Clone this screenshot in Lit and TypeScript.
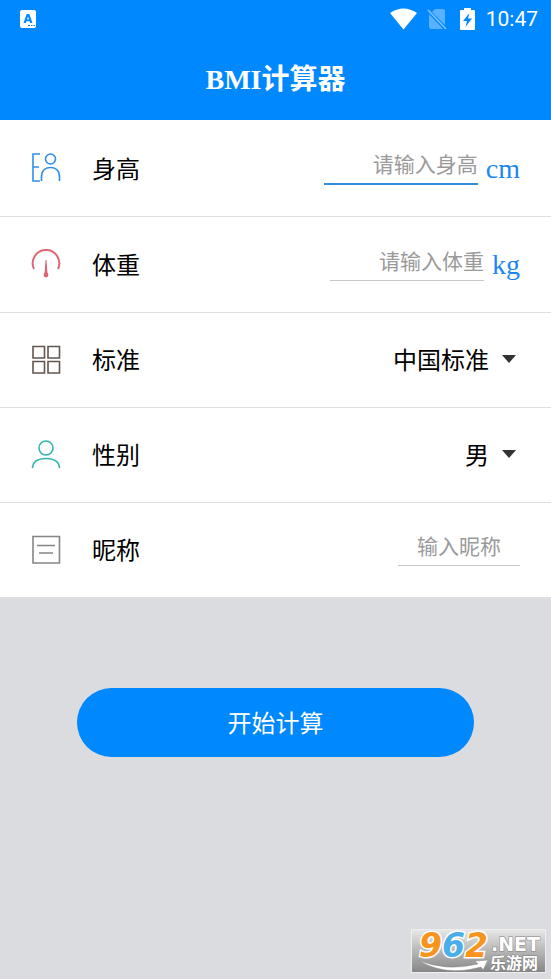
import { LitElement, html, css, svg } from "lit";
import { customElement } from "lit/decorators.js";

const icons = {
  height: svg`<g stroke="#2f8fe6"><path d="M9 1H2V28H9M2 14H8"/><circle cx="19.500" cy="6" r="5"/><path d="M10.500 28V24C10.500 17 15 14.500 19.500 14.500S28.500 17 28.500 24V28"/></g>`,
  weight: svg`<path stroke="#dc6674" stroke-width="2" d="M3 20A13.300 13.300 0 1 1 27 20"/><path fill="#dc6674" d="M14.500 11H15.500L16.500 25H13.500Z"/><circle cx="15" cy="26" r="2.400" fill="#dc6674"/>`,
  standard: svg`<path stroke="#62564f" d="M2 1.500H13.500V13H2ZM17 1.500H28.500V13H17ZM2 16.500H13.500V28H2ZM17 16.500H28.500V28H17Z"/>`,
  gender: svg`<g stroke="#35b5ad"><circle cx="15" cy="8" r="7"/><path d="M1.500 28C2 21 8 18.500 15 18.500S28 21 28.500 28"/></g>`,
  nickname: svg`<path stroke="#858585" d="M2 1.500H28.500V28H2ZM6 10.500H24M8 18H22"/>`,
};

@customElement("app-root")
export class AppRoot extends LitElement {
  static styles = css`
    :host {
      display: flex;
      flex-direction: column;
      position: relative;
      min-height: 100vh;
      background: #dbdce0;
      color: #000;
      font-family: "Liberation Serif", "Noto Sans CJK SC", sans-serif;
      font-size: 24px;
    }
    * { box-sizing: border-box; }
    svg { display: block; flex: none; }
    header { background: #0088ff; color: #fff; }
    .status {
      display: flex;
      align-items: center;
      height: 38px;
      padding: 0 13px 0 19px;
      font: 400 21px/38px Roboto, sans-serif;
    }
    .status .app { margin-right: auto; }
    .wifi { margin-right: 10px; }
    .sim { margin-right: 13px; }
    .battery { margin-right: 11px; }
    h1 {
      margin: 0;
      height: 82px;
      text-align: center;
      font-size: 28px;
      line-height: 84px;
      font-weight: 700;
    }
    main { background: #fff; padding-top: 1px; }
    .row {
      display: flex;
      align-items: center;
      height: 95px;
      padding: 0 31px;
      border-bottom: 1px solid #e0e0e0;
    }
    .row.measure { height: 96px; }
    .row .icon { margin-right: 30px; }
    .row label { margin-right: auto; padding-top: 2px; line-height: 36px; }
    input {
      width: 154px;
      height: 32px;
      padding: 0 0 4px;
      border: 0;
      border-bottom: 1px solid #c8c8c8;
      border-radius: 0;
      background: none;
      outline: none;
      font: inherit;
      font-size: 21px;
      text-align: right;
    }
    input::placeholder { color: #9a9a9a; opacity: 1; }
    input.active { border-bottom: 2px solid #2f8fdc; }
    input.nickname { width: 122px; text-align: center; }
    .unit { margin-left: 8px; color: #1a88ee; font-size: 28px; line-height: 36px; }
    .picker { display: flex; align-items: center; position: relative; }
    select {
      appearance: none;
      border: 0;
      margin: 0;
      padding: 2px 31px 0 0;
      height: 38px;
      background: none;
      color: #000;
      font: inherit;
      text-align-last: right;
    }
    .arrow { position: absolute; right: 4px; pointer-events: none; }
    .start {
      height: 69px;
      margin: 90px 14% 0;
      padding: 0 0 2px;
      border: 0;
      border-radius: 35px;
      background: #0088ff;
      color: #fff;
      font: inherit;
    }
    .mark {
      position: absolute;
      right: 5px;
      bottom: 6px;
      overflow: visible;
    }
    .digits { font: italic 700 33px "DejaVu Sans", sans-serif; stroke: #fff; stroke-width: 3px; paint-order: stroke; }
    .net { font: 700 19px "DejaVu Sans", sans-serif; }
    .site { font: 700 16px "Noto Sans CJK SC", sans-serif; }
    .net, .site { fill: #fff; stroke: #808080; stroke-width: 1px; paint-order: stroke; }
  `;

  private icon(name: keyof typeof icons) {
    return html`<svg class="icon" width="31" height="31" viewBox="0 0 31 31" fill="none" stroke-width="1.6" aria-hidden="true">${icons[name]}</svg>`;
  }

  private arrow() {
    return html`<svg class="arrow" width="14" height="12" viewBox="0 0 14 12" aria-hidden="true"><path d="M0 1H14L7 9Z" fill="#333" /></svg>`;
  }

  render() {
    return html`
      <header>
        <div class="status">
          <svg class="app" width="18" height="18" viewBox="0 0 18 18" aria-hidden="true">
            <rect x="1" width="16" height="18" rx="2" fill="#fff" />
            <path d="M4.500 13L7.700 4H10.300L13.500 13H11.200L10.600 11.200H7.400L6.800 13ZM8 9.500H10L9 6.500Z" fill="#0088ff" fill-rule="evenodd" />
            <path d="M9 15.500H11M12 15.500H13.500M14.500 15.500H16" stroke="#0088ff" />
          </svg>
          <svg class="wifi" width="27" height="22" viewBox="0 0 27 22" aria-hidden="true">
            <path d="M0 5Q13.500-4 27 5L13.500 21.500Z" fill="#fff" />
          </svg>
          <svg class="sim" width="20" height="22" viewBox="0 0 20 22" aria-hidden="true">
            <path d="M8 1H16Q18 1 18 3V17L5 4ZM2 6L16 21H4Q2 21 2 19Z" fill="#fff" opacity=".35" />
            <path d="M1 2L19 21" stroke="#fff" stroke-width="1.600" opacity=".5" />
          </svg>
          <svg class="battery" width="15" height="22" viewBox="0 0 15 22" aria-hidden="true">
            <path d="M1 2H4V0H11V2H14Q15 2 15 3V21Q15 22 14 22H1Q0 22 0 21V3Q0 2 1 2Z" fill="#fff" />
            <path d="M9.500 5L3 13H7L5.500 19L12 10.500H8Z" fill="#0088ff" />
          </svg>
          <span>10:47</span>
        </div>
        <h1>BMI计算器</h1>
      </header>
      <main>
        <div class="row measure">
          ${this.icon("height")}
          <label for="height">身高</label>
          <input id="height" class="active" placeholder="请输入身高" inputmode="decimal" />
          <span class="unit">cm</span>
        </div>
        <div class="row measure">
          ${this.icon("weight")}
          <label for="weight">体重</label>
          <input id="weight" placeholder="请输入体重" inputmode="decimal" />
          <span class="unit">kg</span>
        </div>
        <div class="row">
          ${this.icon("standard")}
          <label for="standard">标准</label>
          <div class="picker">
            <select id="standard"><option>中国标准</option></select>
            ${this.arrow()}
          </div>
        </div>
        <div class="row">
          ${this.icon("gender")}
          <label for="gender">性别</label>
          <div class="picker">
            <select id="gender"><option>男</option></select>
            ${this.arrow()}
          </div>
        </div>
        <div class="row">
          ${this.icon("nickname")}
          <label for="nickname">昵称</label>
          <input id="nickname" class="nickname" placeholder="输入昵称" />
        </div>
      </main>
      <button class="start" type="button">开始计算</button>
      <svg class="mark" width="135" height="44" viewBox="0 0 135 44" role="img" aria-label="962.NET 乐游网">
        <defs>
          <linearGradient id="plate" x2="0" y2="1">
            <stop stop-color="#e8e8e8" />
            <stop offset="1" stop-color="#858585" />
          </linearGradient>
        </defs>
        <rect x=".5" y=".5" width="134" height="43" fill="url(#plate)" stroke="#eee" />
        <path d="M7 31Q35 43 67 35L64 32L77 31L72 41L70 38Q34 48 7 31Z" fill="#fff" stroke="#888" stroke-width=".5" />
        <text class="digits" x="8" y="28"><tspan fill="#f7941d">9</tspan><tspan fill="#4aaee8">6</tspan><tspan fill="#f7941d">2</tspan></text>
        <text class="net" x="80" y="22">.NET</text>
        <text class="site" x="79" y="40">乐游网</text>
      </svg>
    `;
  }
}
